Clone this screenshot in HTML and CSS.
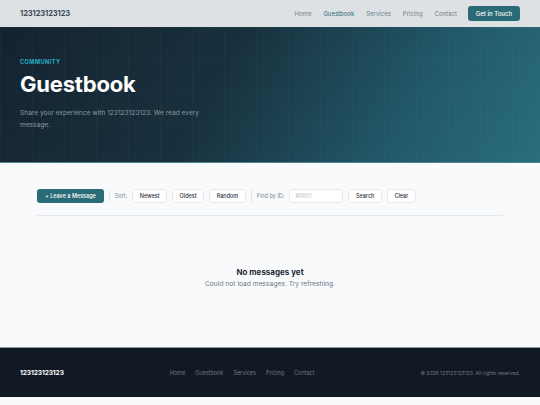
FILE: index.html
```html
<!DOCTYPE html>
<html lang="en">
<head>
  <meta charset="UTF-8">
  <meta name="viewport" content="width=device-width, initial-scale=1.0">
  <title>Guestbook - 123123123123</title>
  <link rel="stylesheet" href="styles.css">
</head>
<body>
  <nav class="topbar">
    <a class="brand" href="#">123123123123</a>
    <div class="nav-links">
      <a href="#">Home</a>
      <a href="#" class="active">Guestbook</a>
      <a href="#">Services</a>
      <a href="#">Pricing</a>
      <a href="#">Contact</a>
      <a href="#" class="btn-cta">Get in Touch</a>
    </div>
  </nav>

  <header class="hero">
    <p class="eyebrow">COMMUNITY</p>
    <h1>Guestbook</h1>
    <p class="lead">Share your experience with 123123123123. We read every message.</p>
  </header>

  <main class="content">
    <div class="toolbar">
      <button class="btn-primary">+ Leave a Message</button>
      <span class="sep"></span>
      <span class="label">Sort:</span>
      <button class="btn-light">Newest</button>
      <button class="btn-light">Oldest</button>
      <button class="btn-light">Random</button>
      <span class="sep"></span>
      <span class="label">Find by ID:</span>
      <input type="text" class="id-input" placeholder="#0001">
      <button class="btn-light">Search</button>
      <button class="btn-light">Clear</button>
    </div>

    <div class="empty">
      <h3>No messages yet</h3>
      <p>Could not load messages. Try refreshing.</p>
    </div>
  </main>

  <footer class="footer">
    <span class="brand light">123123123123</span>
    <div class="footer-links">
      <a href="#">Home</a>
      <a href="#">Guestbook</a>
      <a href="#">Services</a>
      <a href="#">Pricing</a>
      <a href="#">Contact</a>
    </div>
    <span class="copy">&copy; 2026 123123123123. All rights reserved.</span>
  </footer>
  <div class="after"></div>
</body>
</html>
```

FILE: styles.css
```css
body {
  font-family: Inter, "Noto Sans", sans-serif;
  background-color: #f8fafc;
  margin: 0;
  padding: 0;
  color: #1e293b;
}
a {
  text-decoration: none;
}
.topbar {
  height: 27px;
  background-color: #dde1e3;
  display: flex;
  align-items: center;
  justify-content: space-between;
  padding: 0 20px;
}
.brand {
  font-size: 7.5px;
  font-weight: 700;
  color: #3d4b58;
  letter-spacing: -0.1px;
}
.brand.light {
  color: #ffffff;
  font-size: 6.6px;
}
.nav-links {
  display: flex;
  align-items: center;
  gap: 12px;
}
.nav-links a {
  font-size: 6px;
  color: #6e7f8c;
}
.nav-links a.active {
  color: #2a6b77;
}
.nav-links a.btn-cta {
  background-color: #2a6b77;
  color: #ffffff;
  padding: 4px 8px;
  border-radius: 3px;
  margin-left: -1px;
  font-size: 6px;
  font-weight: 500;
}
.hero {
  height: 136px;
  box-sizing: border-box;
  padding: 32px 20px 0;
  background-color: #152430;
  background-image:
    linear-gradient(rgba(255, 255, 255, 0.025) 1px, transparent 1px),
    linear-gradient(90deg, rgba(255, 255, 255, 0.025) 1px, transparent 1px),
    linear-gradient(120deg, #152331 0%, #18303d 40%, #22596a 75%, #2a6e79 100%);
  background-size: 32px 32px, 32px 32px, 100% 100%;
  border-bottom: 1px solid #4c858f;
}
.eyebrow {
  margin: 0;
  font-size: 5.5px;
  font-weight: 700;
  letter-spacing: 0.5px;
  color: #22b1c2;
}
.hero h1 {
  margin: 5px 0 0;
  font-size: 22px;
  line-height: 28px;
  font-weight: 700;
  color: #ffffff;
  letter-spacing: -0.2px;
}
.lead {
  margin: 9px 0 0;
  max-width: 200px;
  font-size: 6.6px;
  line-height: 12px;
  color: #8b98a2;
}
.content {
  padding: 26px 37px 0;
  height: 183px;
  box-sizing: border-box;
}
.toolbar {
  display: flex;
  align-items: center;
  gap: 5px;
  padding-bottom: 12px;
  border-bottom: 1px solid #e5e9ee;
}
.toolbar button {
  font-family: inherit;
  font-size: 5.5px;
  height: 14px;
  border-radius: 3px;
  cursor: pointer;
}
.btn-primary {
  background-color: #2a6b77;
  color: #ffffff;
  border: none;
  padding: 0 8px;
  font-weight: 500;
}
.btn-light {
  background-color: #ffffff;
  color: #2b3540;
  border: 1px solid #e6e9ee;
  padding: 0 6.5px;
  font-weight: 500;
}
.sep {
  width: 1px;
  height: 12px;
  background-color: #e2e6eb;
}
.label {
  font-size: 5.5px;
  color: #7c8894;
}
.id-input {
  width: 54px;
  height: 14px;
  box-sizing: border-box;
  border: 1px solid #e6e9ee;
  border-radius: 3px;
  background-color: #ffffff;
  font-family: inherit;
  font-size: 5.5px;
  padding: 0 5px;
}
.id-input::placeholder {
  color: #b3bcc5;
}
.empty {
  text-align: center;
  margin-top: 51px;
}
.empty h3 {
  margin: 0;
  font-size: 8px;
  font-weight: 700;
  color: #1f2933;
}
.empty p {
  margin: 3px 0 0;
  font-size: 6.7px;
  color: #6b7785;
}
.footer {
  height: 50px;
  box-sizing: border-box;
  background-color: #111a24;
  border-top: 1px solid #8e969d;
  display: flex;
  align-items: center;
  justify-content: space-between;
  padding: 0 20px;
  margin-top: 1px;
}
.footer-links {
  display: flex;
  gap: 10px;
}
.footer-links a {
  font-size: 5.5px;
  color: #6c7785;
}
.copy {
  font-size: 5px;
  color: #6c7785;
}
.after {
  height: 8px;
}
```
